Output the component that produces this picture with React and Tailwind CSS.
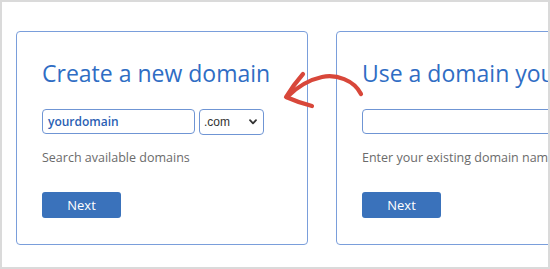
import React from "react";

const font = { fontFamily: '"Open Sans", "Liberation Sans", sans-serif' };

function Card({ title, children, hint }) {
  return (
    <div className="shrink-0 w-[292px] h-[214px] border border-[#7a9edb] rounded-[4px] bg-white pt-[30px] pl-[25px]">
      <div className="text-[23px] leading-[23px] text-[#2f6dc4] whitespace-nowrap">{title}</div>
      <div className="mt-[24px] flex gap-[4px] h-[25px]">{children}</div>
      <div className="mt-[17px] text-[12.5px] leading-[13px] text-[#6b6b6b] whitespace-nowrap">{hint}</div>
      <button className="mt-[28px] w-[79px] h-[26px] rounded-[3px] bg-[#3a72bb] text-white text-[13px] leading-[26px] text-center">
        Next
      </button>
    </div>
  );
}

export default function App() {
  return (
    <div
      className="relative w-[550px] h-[269px] overflow-hidden bg-white border-2 border-[#dadada]"
      style={font}
    >
      <div className="flex gap-[28px] pt-[29px] pl-[14px]">
        <Card title="Create a new domain" hint="Search available domains">
          <div className="w-[153px] h-[25px] border border-[#6f95d4] rounded-[4px] pl-[5px] text-[12px] leading-[23px] font-semibold text-[#2a5fb4]">
            yourdomain
          </div>
          <div className="w-[65px] h-[26px] border border-[#6f95d4] rounded-[4px] pl-[4px] pr-[6px] flex items-center justify-between">
            <span className="text-[12px] text-[#333]" style={{ fontFamily: '"Liberation Sans", Arial, sans-serif' }}>
              .com
            </span>
            <svg width="8" height="6" viewBox="0 0 8 6">
              <path d="M1 1.2 L4 4.4 L7 1.2" fill="none" stroke="#333" strokeWidth="1.8" strokeLinecap="round" strokeLinejoin="round" />
            </svg>
          </div>
        </Card>
        <Card title="Use a domain you own" hint="Enter your existing domain name">
          <div className="w-[260px] h-[25px] border border-[#6f95d4] rounded-[4px]" />
        </Card>
      </div>
      <svg className="absolute left-0 top-0" width="550" height="269" viewBox="0 0 550 269">
        <g transform="translate(-2 -2)" fill="none" stroke="#d8473a" strokeWidth="4.2" strokeLinecap="round" strokeLinejoin="round">
          <path d="M361 94 C 354 80, 336 74, 322 77 C 308 80, 296 88, 287 97" />
          <path d="M303 74 C 296 82, 291 89, 286 97 C 295 101, 304 104, 312 106" />
        </g>
      </svg>
    </div>
  );
}
